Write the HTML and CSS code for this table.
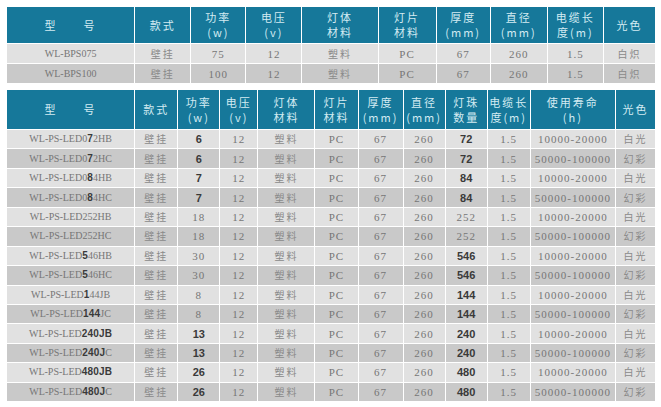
FILE: index.html
```html
<!DOCTYPE html>
<html lang="zh">
<head>
<meta charset="utf-8">
<link rel="stylesheet" href="styles.css">
</head>
<body>
<div class="page">
<table class="spec spec-top">
  <colgroup>
    <col style="width:128px"><col style="width:56px"><col style="width:55px"><col style="width:56px"><col style="width:76px"><col style="width:58px"><col style="width:54px"><col style="width:57px"><col style="width:56px"><col style="width:52px">
  </colgroup>
  <thead>
    <tr class="hd">
      <th>型　　号</th><th>款式</th><th>功率<br>(w)</th><th>电压<br>(v)</th><th>灯体<br>材料</th><th>灯片<br>材料</th><th>厚度<br>(mm)</th><th>直径<br>(mm)</th><th>电缆长<br>度(m)</th><th>光色</th>
    </tr>
  </thead>
  <tbody>
    <tr class="lt"><td class="model">WL-BPS075</td><td class="cn">壁挂</td><td class="num">75</td><td class="num">12</td><td class="cn">塑料</td><td class="num">PC</td><td class="num">67</td><td class="num">260</td><td class="num">1.5</td><td class="cn">白炽</td></tr>
    <tr class="dk"><td class="model">WL-BPS100</td><td class="cn">壁挂</td><td class="num">100</td><td class="num">12</td><td class="cn">塑料</td><td class="num">PC</td><td class="num">67</td><td class="num">260</td><td class="num">1.5</td><td class="cn">白炽</td></tr>
  </tbody>
</table>

<table class="spec spec-bottom">
  <colgroup>
    <col style="width:128px"><col style="width:43px"><col style="width:42px"><col style="width:38px"><col style="width:57px"><col style="width:43px"><col style="width:45px"><col style="width:42px"><col style="width:42px"><col style="width:43px"><col style="width:85px"><col style="width:40px">
  </colgroup>
  <thead>
    <tr class="hd">
      <th>型　　号</th><th>款式</th><th>功率<br>(w)</th><th>电压<br>(v)</th><th>灯体<br>材料</th><th>灯片<br>材料</th><th>厚度<br>(mm)</th><th>直径<br>(mm)</th><th>灯珠<br>数量</th><th>电缆长<br>度(m)</th><th>使用寿命<br>(h)</th><th>光色</th>
    </tr>
  </thead>
  <tbody>
    <tr class="lt"><td class="model">WL-PS-LED0<b>7</b>2HB</td><td class="cn">壁挂</td><td class="num"><b>6</b></td><td class="num">12</td><td class="cn">塑料</td><td class="num">PC</td><td class="num">67</td><td class="num">260</td><td class="num"><b>72</b></td><td class="num">1.5</td><td class="num">10000-20000</td><td class="cn">白光</td></tr>
    <tr class="dk"><td class="model">WL-PS-LED0<b>7</b>2HC</td><td class="cn">壁挂</td><td class="num"><b>6</b></td><td class="num">12</td><td class="cn">塑料</td><td class="num">PC</td><td class="num">67</td><td class="num">260</td><td class="num"><b>72</b></td><td class="num">1.5</td><td class="num">50000-100000</td><td class="cn">幻彩</td></tr>
    <tr class="lt"><td class="model">WL-PS-LED0<b>8</b>4HB</td><td class="cn">壁挂</td><td class="num"><b>7</b></td><td class="num">12</td><td class="cn">塑料</td><td class="num">PC</td><td class="num">67</td><td class="num">260</td><td class="num"><b>84</b></td><td class="num">1.5</td><td class="num">10000-20000</td><td class="cn">白光</td></tr>
    <tr class="dk"><td class="model">WL-PS-LED0<b>8</b>4HC</td><td class="cn">壁挂</td><td class="num"><b>7</b></td><td class="num">12</td><td class="cn">塑料</td><td class="num">PC</td><td class="num">67</td><td class="num">260</td><td class="num"><b>84</b></td><td class="num">1.5</td><td class="num">50000-100000</td><td class="cn">幻彩</td></tr>
    <tr class="lt"><td class="model">WL-PS-LED252HB</td><td class="cn">壁挂</td><td class="num">18</td><td class="num">12</td><td class="cn">塑料</td><td class="num">PC</td><td class="num">67</td><td class="num">260</td><td class="num">252</td><td class="num">1.5</td><td class="num">10000-20000</td><td class="cn">白光</td></tr>
    <tr class="dk"><td class="model">WL-PS-LED252HC</td><td class="cn">壁挂</td><td class="num">18</td><td class="num">12</td><td class="cn">塑料</td><td class="num">PC</td><td class="num">67</td><td class="num">260</td><td class="num">252</td><td class="num">1.5</td><td class="num">50000-100000</td><td class="cn">幻彩</td></tr>
    <tr class="lt"><td class="model">WL-PS-LED<b>5</b>46HB</td><td class="cn">壁挂</td><td class="num">30</td><td class="num">12</td><td class="cn">塑料</td><td class="num">PC</td><td class="num">67</td><td class="num">260</td><td class="num"><b>546</b></td><td class="num">1.5</td><td class="num">10000-20000</td><td class="cn">白光</td></tr>
    <tr class="dk"><td class="model">WL-PS-LED<b>5</b>46HC</td><td class="cn">壁挂</td><td class="num">30</td><td class="num">12</td><td class="cn">塑料</td><td class="num">PC</td><td class="num">67</td><td class="num">260</td><td class="num"><b>546</b></td><td class="num">1.5</td><td class="num">50000-100000</td><td class="cn">幻彩</td></tr>
    <tr class="lt"><td class="model">WL-PS-LED<b>1</b>44JB</td><td class="cn">壁挂</td><td class="num">8</td><td class="num">12</td><td class="cn">塑料</td><td class="num">PC</td><td class="num">67</td><td class="num">260</td><td class="num"><b>144</b></td><td class="num">1.5</td><td class="num">10000-20000</td><td class="cn">白光</td></tr>
    <tr class="dk"><td class="model">WL-PS-LED<b>144</b>JC</td><td class="cn">壁挂</td><td class="num">8</td><td class="num">12</td><td class="cn">塑料</td><td class="num">PC</td><td class="num">67</td><td class="num">260</td><td class="num"><b>144</b></td><td class="num">1.5</td><td class="num">50000-100000</td><td class="cn">幻彩</td></tr>
    <tr class="lt"><td class="model">WL-PS-LED<b>240JB</b></td><td class="cn">壁挂</td><td class="num"><b>13</b></td><td class="num">12</td><td class="cn">塑料</td><td class="num">PC</td><td class="num">67</td><td class="num">260</td><td class="num"><b>240</b></td><td class="num">1.5</td><td class="num">10000-20000</td><td class="cn">白光</td></tr>
    <tr class="dk"><td class="model">WL-PS-LED<b>240J</b>C</td><td class="cn">壁挂</td><td class="num"><b>13</b></td><td class="num">12</td><td class="cn">塑料</td><td class="num">PC</td><td class="num">67</td><td class="num">260</td><td class="num"><b>240</b></td><td class="num">1.5</td><td class="num">50000-100000</td><td class="cn">幻彩</td></tr>
    <tr class="lt"><td class="model">WL-PS-LED<b>480JB</b></td><td class="cn">壁挂</td><td class="num"><b>26</b></td><td class="num">12</td><td class="cn">塑料</td><td class="num">PC</td><td class="num">67</td><td class="num">260</td><td class="num"><b>480</b></td><td class="num">1.5</td><td class="num">10000-20000</td><td class="cn">白光</td></tr>
    <tr class="dk"><td class="model">WL-PS-LED<b>480J</b>C</td><td class="cn">壁挂</td><td class="num"><b>26</b></td><td class="num">12</td><td class="cn">塑料</td><td class="num">PC</td><td class="num">67</td><td class="num">260</td><td class="num"><b>480</b></td><td class="num">1.5</td><td class="num">50000-100000</td><td class="cn">幻彩</td></tr>
  </tbody>
</table>
</div>
</body>
</html>
```

FILE: styles.css
```css
html, body {
  margin: 0;
  padding: 0;
  background: #ffffff;
}
.page {
  padding: 6px 0 0 6px;
  display: flex;
  flex-direction: column;
  gap: 5px;
}
.spec {
  border-collapse: collapse;
  table-layout: fixed;
  width: 650px;
}
.spec th, .spec td {
  border: 1px solid #ffffff;
  padding: 0;
  text-align: center;
  vertical-align: middle;
  overflow: hidden;
  white-space: nowrap;
}
.spec th {
  background: #16789a;
  color: #d3ebf2;
  font-family: "Noto Sans CJK SC", "Noto Sans", sans-serif;
  font-weight: 400;
  font-size: 11px;
  line-height: 15px;
  letter-spacing: 2px;
}
.spec-top .hd { height: 37px; }
.spec-bottom .hd { height: 40px; }
.spec-top tbody tr { height: 20px; }
.spec-bottom tbody tr { height: 19.45px; }
.lt td { background: #e1e1e1; }
.dk td { background: #c9c9c9; }
.spec td {
  color: #767676;
  font-family: "Liberation Serif", "Noto Sans CJK SC", serif;
  font-size: 11px;
  line-height: 14px;
}
.spec td.model {
  font-size: 10px;
  letter-spacing: 0;
}
.spec td.num {
  letter-spacing: 1px;
}
.spec td.cn {
  font-family: "Noto Sans CJK SC", sans-serif;
  font-size: 10px;
  letter-spacing: 2px;
  color: #8a8a8a;
}
.spec td b {
  font-family: "Liberation Sans", Arial, sans-serif;
  font-weight: 700;
  color: #3a3a3a;
  letter-spacing: 0;
}
.spec td.model b {
  font-size: 10px;
  letter-spacing: 0.2px;
}
```
